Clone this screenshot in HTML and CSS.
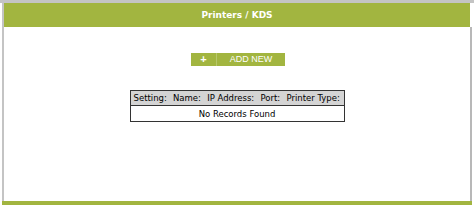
FILE: index.html
```html
<!DOCTYPE html>
<html>
<head>
    <meta charset="utf-8">
    <title>Printers / KDS</title>
    <link rel="stylesheet" href="styles.css">
</head>
<body>
    <div class="frame">
        <div class="title-bar">Printers / KDS</div>

        <div class="content">
            <a href="#" class="add-button">
                <span class="add-icon">+</span>
                <span class="add-label">ADD NEW</span>
            </a>

            <table class="records">
                <thead>
                    <tr>
                        <th>Setting:</th>
                        <th>Name:</th>
                        <th>IP Address:</th>
                        <th>Port:</th>
                        <th>Printer Type:</th>
                    </tr>
                </thead>
                <tbody>
                    <tr>
                        <td colspan="5">No Records Found</td>
                    </tr>
                </tbody>
            </table>
        </div>

        <div class="bottom-bar"></div>
    </div>
</body>
</html>
```

FILE: styles.css
```css
html, body {
    margin: 0;
    padding: 0;
    background: white;
}
body {
    font-family: "DejaVu Sans", Verdana, sans-serif;
    color: black;
}
.frame {
    height: 205px;
    border-top: 3px solid #c4c4c4;
    box-sizing: border-box;
    display: flex;
    flex-direction: column;
}
.title-bar {
    margin: 0 4px 0 2px;
    border-left: 2px solid #c4c4c4;
    height: 24px;
    line-height: 24px;
    background: #a2b540;
    color: white;
    font-size: 9px;
    font-weight: bold;
    text-align: center;
}
.content {
    flex: 1;
    margin: 0 2px 0 2px;
    border-left: 2px solid #c4c4c4;
    border-right: 2px solid #b8b8b8;
    display: flex;
    flex-direction: column;
    align-items: center;
    padding-top: 26px;
}
.add-button {
    display: flex;
    width: 94px;
    height: 13px;
    margin-left: 2px;
    background: #a2b540;
    color: white;
    text-decoration: none;
    font-family: "Liberation Sans", Arial, sans-serif;
    font-size: 9px;
    line-height: 13px;
}
.add-icon {
    width: 25px;
    text-align: center;
    font-weight: bold;
    font-size: 11px;
    border-right: 1px solid #b7c76a;
}
.add-label {
    flex: 1;
    text-align: center;
}
.records {
    margin-top: 24px;
    width: 215px;
    border-collapse: collapse;
    border: 1px solid #333;
    font-size: 8.5px;
}
.records th {
    background: #d4d4d4;
    font-weight: normal;
    height: 14px;
    padding: 0 2px;
    border-bottom: 1px solid #333;
    white-space: nowrap;
}
.records td {
    height: 15px;
    text-align: center;
    padding: 0;
}
.bottom-bar {
    height: 4px;
    margin: 0 2px;
    background: #a2b540;
}
```
